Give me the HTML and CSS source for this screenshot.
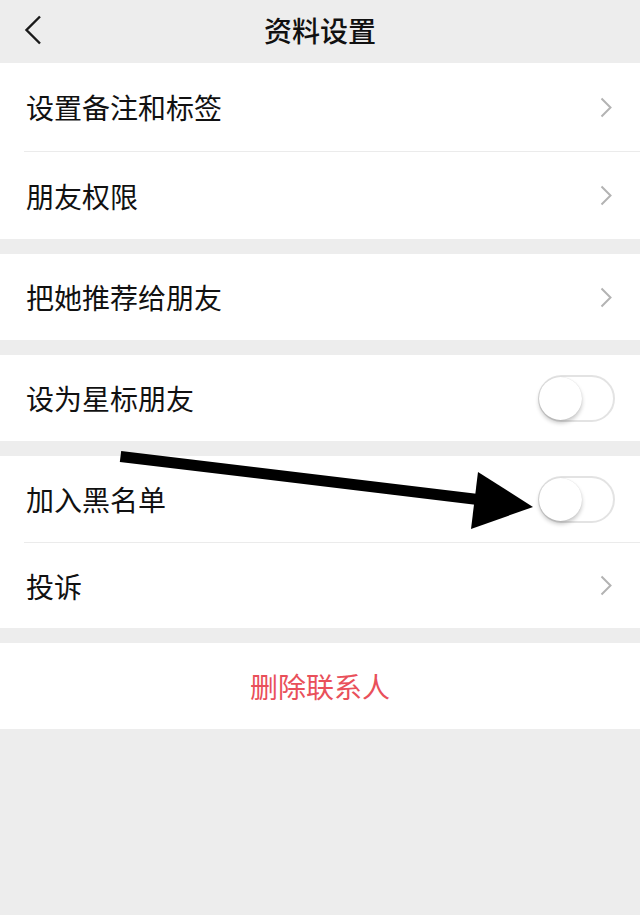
FILE: index.html
```html
<!DOCTYPE html>
<html lang="zh-CN">
<head>
    <meta charset="UTF-8">
    <meta name="viewport" content="width=device-width, initial-scale=1.0">
    <title>资料设置</title>
    <link rel="stylesheet" href="styles.css">
</head>
<body>
    <div class="page">
        <header class="nav">
            <button class="back" aria-label="返回">
                <svg width="20" height="30" viewBox="0 0 20 30"><path d="M17 1.5 L3.5 15 L17 28.5" fill="none" stroke="#1a1a1a" stroke-width="2.4"/></svg>
            </button>
            <h1 class="nav-title">资料设置</h1>
            <span></span>
        </header>

        <section class="group group-top">
            <div class="row">
                <span class="label">设置备注和标签</span>
                <svg class="chevron" width="12" height="21" viewBox="0 0 12 21"><path d="M1.5 1.5 L10.5 10.5 L1.5 19.5" fill="none" stroke="#b3b3b3" stroke-width="2"/></svg>
            </div>
            <div class="row">
                <span class="label">朋友权限</span>
                <svg class="chevron" width="12" height="21" viewBox="0 0 12 21"><path d="M1.5 1.5 L10.5 10.5 L1.5 19.5" fill="none" stroke="#b3b3b3" stroke-width="2"/></svg>
            </div>
        </section>

        <section class="group">
            <div class="row">
                <span class="label">把她推荐给朋友</span>
                <svg class="chevron" width="12" height="21" viewBox="0 0 12 21"><path d="M1.5 1.5 L10.5 10.5 L1.5 19.5" fill="none" stroke="#b3b3b3" stroke-width="2"/></svg>
            </div>
        </section>

        <section class="group">
            <div class="row">
                <span class="label">设为星标朋友</span>
                <span class="switch"><span class="knob"></span></span>
            </div>
        </section>

        <section class="group">
            <div class="row">
                <span class="label">加入黑名单</span>
                <span class="switch"><span class="knob"></span></span>
            </div>
            <div class="row">
                <span class="label">投诉</span>
                <svg class="chevron" width="12" height="21" viewBox="0 0 12 21"><path d="M1.5 1.5 L10.5 10.5 L1.5 19.5" fill="none" stroke="#b3b3b3" stroke-width="2"/></svg>
            </div>
        </section>

        <section class="group">
            <div class="row row-danger">删除联系人</div>
        </section>

        <svg class="annotation" width="640" height="915" viewBox="0 0 640 915">
            <line x1="120.5" y1="456.5" x2="482" y2="500" stroke="#000" stroke-width="11"/>
            <polygon points="478,472 533,507 471,529" fill="#000"/>
        </svg>
    </div>
</body>
</html>
```

FILE: styles.css
```css
* {
    margin: 0;
    padding: 0;
    box-sizing: border-box;
}
body {
    font-family: "Noto Sans CJK SC", "Noto Sans", sans-serif;
    background: #ededed;
    color: #111;
}
.page {
    position: relative;
    width: 640px;
    min-height: 915px;
    background: #ededed;
}
.nav {
    height: 63px;
    display: grid;
    grid-template-columns: 64px 1fr 64px;
    align-items: center;
}
.back {
    border: none;
    background: none;
    padding-left: 23px;
    height: 63px;
    display: flex;
    align-items: center;
    padding-bottom: 3px;
}
.nav-title {
    text-align: center;
    font-size: 28px;
    font-weight: 500;
    color: #111;
    line-height: 1;
    padding-bottom: 4px;
}
.group {
    background: white;
    margin-bottom: 15px;
}
.row {
    height: 86px;
    display: flex;
    align-items: center;
    justify-content: space-between;
    padding: 0 25px 0 26px;
}
.group-top .row {
    height: 88px;
}
.row + .row {
    border-top: 1px solid #ebebeb;
    margin-left: 24px;
    padding-left: 2px;
}
.label {
    font-size: 28px;
    line-height: 1;
    color: #111;
}
.chevron {
    margin-right: 3px;
}
.switch {
    width: 77px;
    height: 47px;
    border: 2px solid #e3e3e3;
    border-radius: 24px;
    background: white;
    position: relative;
}
.knob {
    position: absolute;
    left: -1px;
    top: 0;
    width: 43px;
    height: 43px;
    border-radius: 50%;
    background: white;
    box-shadow: 0 3px 4px rgba(0, 0, 0, 0.22), 0 0 1px rgba(0, 0, 0, 0.15);
}
.row-danger {
    justify-content: center;
    font-size: 28px;
    color: #e9505a;
    padding-right: 26px;
}
.annotation {
    position: absolute;
    top: 0;
    left: 0;
    pointer-events: none;
}
```
